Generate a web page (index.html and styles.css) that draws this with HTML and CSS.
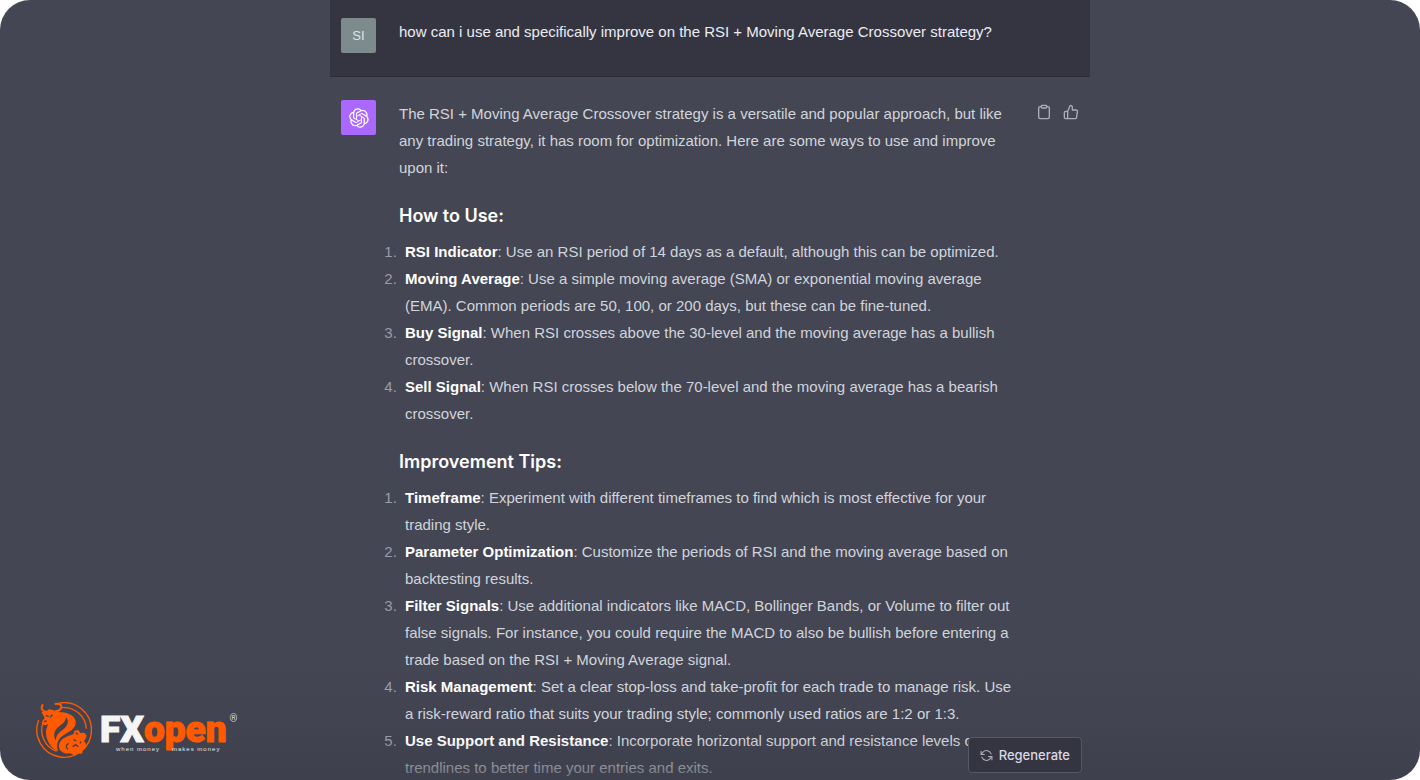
FILE: index.html
```html
<!DOCTYPE html>
<html lang="en">
<head>
  <meta charset="UTF-8" />
  <meta name="viewport" content="width=device-width, initial-scale=1.0" />
  <title>RSI + Moving Average Crossover</title>
  <link rel="stylesheet" href="styles.css">
</head>
<body>
  <div class="frame">
    <main class="chat">
      <section class="message user">
        <div class="avatar avatar-user">SI</div>
        <div class="content">
          <p>how can i use and specifically improve on the RSI + Moving Average Crossover strategy?</p>
        </div>
      </section>

      <section class="message">
        <div class="avatar avatar-bot">
          <svg width="20" height="20" viewBox="0 0 41 41" fill="currentColor" aria-hidden="true"><path d="M37.532 16.87a9.963 9.963 0 0 0-.856-8.184 10.078 10.078 0 0 0-10.855-4.835A9.964 9.964 0 0 0 18.306.5a10.079 10.079 0 0 0-9.614 6.977 9.967 9.967 0 0 0-6.664 4.834 10.08 10.08 0 0 0 1.24 11.817 9.965 9.965 0 0 0 .856 8.185 10.079 10.079 0 0 0 10.855 4.835 9.965 9.965 0 0 0 7.516 3.35 10.078 10.078 0 0 0 9.617-6.981 9.967 9.967 0 0 0 6.663-4.834 10.079 10.079 0 0 0-1.243-11.813ZM22.498 37.886a7.474 7.474 0 0 1-4.799-1.735c.061-.033.168-.091.237-.134l7.964-4.6a1.294 1.294 0 0 0 .655-1.134V19.054l3.366 1.944a.12.12 0 0 1 .066.092v9.299a7.505 7.505 0 0 1-7.49 7.496ZM6.392 31.006a7.471 7.471 0 0 1-.894-5.023c.06.036.162.099.237.141l7.964 4.6a1.297 1.297 0 0 0 1.308 0l9.724-5.614v3.888a.12.12 0 0 1-.048.103l-8.051 4.649a7.504 7.504 0 0 1-10.24-2.744ZM4.297 13.62A7.469 7.469 0 0 1 8.2 10.333c0 .068-.004.19-.004.274v9.201a1.294 1.294 0 0 0 .654 1.132l9.723 5.614-3.366 1.944a.12.12 0 0 1-.114.01L7.04 23.856a7.504 7.504 0 0 1-2.743-10.237Zm27.658 6.437-9.724-5.615 3.367-1.943a.121.121 0 0 1 .113-.01l8.052 4.648a7.498 7.498 0 0 1-1.158 13.528v-9.476a1.293 1.293 0 0 0-.65-1.132Zm3.35-5.043c-.059-.037-.162-.099-.236-.141l-7.965-4.6a1.298 1.298 0 0 0-1.308 0l-9.723 5.614v-3.888a.12.12 0 0 1 .048-.103l8.05-4.645a7.497 7.497 0 0 1 11.135 7.763Zm-21.063 6.929-3.367-1.944a.12.12 0 0 1-.065-.092v-9.299a7.497 7.497 0 0 1 12.293-5.756 6.94 6.94 0 0 0-.236.134l-7.965 4.6a1.294 1.294 0 0 0-.654 1.132l-.006 11.225Zm1.829-3.943 4.33-2.501 4.332 2.5v5l-4.331 2.5-4.331-2.5V18Z"/></svg>
        </div>
        <div class="content">
          <p>The RSI + Moving Average Crossover strategy is a versatile and popular approach, but like any trading strategy, it has room for optimization. Here are some ways to use and improve upon it:</p>

          <h3>How to Use:</h3>
          <ol>
            <li><strong>RSI Indicator</strong>: Use an RSI period of 14 days as a default, although this can be optimized.</li>
            <li><strong>Moving Average</strong>: Use a simple moving average (SMA) or exponential moving average (EMA). Common periods are 50, 100, or 200 days, but these can be fine-tuned.</li>
            <li><strong>Buy Signal</strong>: When RSI crosses above the 30-level and the moving average has a bullish crossover.</li>
            <li><strong>Sell Signal</strong>: When RSI crosses below the 70-level and the moving average has a bearish crossover.</li>
          </ol>

          <h3>Improvement Tips:</h3>
          <ol>
            <li><strong>Timeframe</strong>: Experiment with different timeframes to find which is most effective for your trading style.</li>
            <li><strong>Parameter Optimization</strong>: Customize the periods of RSI and the moving average based on backtesting results.</li>
            <li><strong>Filter Signals</strong>: Use additional indicators like MACD, Bollinger Bands, or Volume to filter out false signals. For instance, you could require the MACD to also be bullish before entering a trade based on the RSI + Moving Average signal.</li>
            <li><strong>Risk Management</strong>: Set a clear stop-loss and take-profit for each trade to manage risk. Use a risk-reward ratio that suits your trading style; commonly used ratios are 1:2 or 1:3.</li>
            <li><strong>Use Support and Resistance</strong>: Incorporate horizontal support and resistance levels or trendlines to better time your entries and exits.</li>
          </ol>
        </div>
        <div class="actions">
          <button type="button" aria-label="Copy">
            <svg width="16" height="16" viewBox="0 0 24 24" aria-hidden="true"><path d="M16 4h2a2 2 0 0 1 2 2v14a2 2 0 0 1-2 2H6a2 2 0 0 1-2-2V6a2 2 0 0 1 2-2h2"/><rect x="8" y="2" width="8" height="4" rx="1"/></svg>
          </button>
          <button type="button" aria-label="Good response">
            <svg width="16" height="16" viewBox="0 0 24 24" aria-hidden="true"><path d="M14 9V5a3 3 0 0 0-3-3l-4 9v11h11.28a2 2 0 0 0 2-1.7l1.38-9a2 2 0 0 0-2-2.3zM7 22H4a2 2 0 0 1-2-2v-7a2 2 0 0 1 2-2h3"/></svg>
          </button>
        </div>
      </section>

      <div class="fade"></div>
      <button type="button" class="regenerate">
        <svg width="13" height="13" viewBox="0 0 24 24" aria-hidden="true"><path d="M2 4v6h6M22 20v-6h-6"/><path d="M20.5 9A9 9 0 0 0 5.6 5.600L2 10M22 14l-3.600 4.400A9 9 0 0 1 3.500 15"/></svg>
        Regenerate
      </button>
    </main>

    <a class="brand" href="#" aria-label="FXOpen">
      <svg class="emblem" width="56" height="56" viewBox="0 0 168 168" aria-hidden="true">
        <!-- rings -->
        <g fill="none" stroke="currentColor" stroke-width="4">
          <path d="M70 3A82 82 0 1 1 8 54"/>
          <path d="M78 17A67 67 0 0 1 151 80M22 60A67 67 0 0 0 62 148"/>
        </g>
        <!-- bull -->
        <path fill="none" stroke="currentColor" stroke-width="6" d="M21 7C12 20 20 32 38 29M56 6C72 2 80 12 74 20 70 27 62 28 56 28"/>
        <path fill="currentColor" d="M16 29l14 1 8-8 14 2 6 6c32-2 58 8 61 28 2 20-16 30-34 40-20 12-26 30-18 50-24-10-38-34-37-62l6-20-7 4-11-3 1-9 7-11z"/>
        <path class="emblem-hole" d="M90 46c11 12 5 26-8 36-12 9-23 18-22 34-10-16-5-32 8-42 12-9 21-15 22-28z"/>
        <!-- bear -->
        <path fill="currentColor" d="M74 146c-10-10-6-28 10-38 10-6 20-8 28-11l3-11 12-2 6 9 11-1 8 8-3 11-5 5 6 9-1 13-8 6-3 11-14-1-9 6-13-6c-10 2-20 0-28-8z"/>
        <g class="emblem-cut" fill="none" stroke-width="4">
          <path d="M29 40l9 4M50 38l-8 8M24 59l8-2"/>
          <path d="M98 124c-8 4-10 12-2 18M110 134l9-6 8 6M112 113l9 4M135 119l-3 5M120 92l5 6"/>
        </g>
      </svg>
      <span class="wordmark">
        <span class="name"><b>FX</b>open<sup>®</sup></span>
        <span class="tagline"><span>when money</span><span>makes money</span></span>
      </span>
    </a>
  </div>
</body>
</html>
```

FILE: styles.css
```css
* {
  margin: 0;
  padding: 0;
  box-sizing: border-box;
}

body {
  font-family: "Liberation Sans", Arial, sans-serif;
  font-size: 15px;
  line-height: 27px;
  background: #fff;
  color: #d1d5db;
}

.frame {
  position: relative;
  height: 100vh;
  overflow: hidden;
  border-radius: 30px;
  background: linear-gradient(#444654 86%, #3f404d);
}

.chat {
  position: relative;
  max-width: 760px;
  height: 100%;
  margin: 0 auto;
  overflow: hidden;
}

.message {
  display: flex;
  align-items: flex-start;
  padding: 23px 11px;
}

.message.user {
  padding: 18px 11px 23px;
  background: #343541;
  border-bottom: 1px solid #2b2c34;
  color: #ececf1;
}

.avatar {
  display: flex;
  align-items: center;
  justify-content: center;
  flex: none;
  width: 35px;
  height: 35px;
  margin-right: 23px;
  border-radius: 2px;
}

.avatar-user {
  background: #7e8b8c;
  color: #dfe3e3;
  font-size: 13px;
}

.avatar-bot {
  background: #ab68ff;
  color: #fff;
}

.content {
  flex: 1;
}

h3 {
  margin: 21px 0 9px;
  font-family: Inter, sans-serif;
  font-size: 18px;
  font-weight: 600;
  color: #fff;
}

ol {
  padding-left: 2px;
}

li {
  padding-left: 4px;
}

li::marker {
  color: #9a9bab;
}

strong {
  font-weight: 700;
  color: #fff;
}

.actions {
  display: flex;
  gap: 11px;
  padding: 4px 0 0 18px;
}

button {
  border: 0;
  background: none;
  color: #acacbe;
  font: inherit;
  cursor: pointer;
}

.actions button {
  display: flex;
}

button svg {
  fill: none;
  stroke: currentColor;
  stroke-width: 2;
  stroke-linecap: round;
  stroke-linejoin: round;
}

.fade {
  position: absolute;
  inset: auto 0 0;
  height: 40px;
  background: linear-gradient(rgba(63, 64, 77, 0), rgba(63, 64, 77, 0.7));
}

.regenerate {
  position: absolute;
  right: 8px;
  bottom: 7px;
  display: flex;
  align-items: center;
  gap: 6px;
  height: 36px;
  padding: 0 11px;
  border: 1px solid #565869;
  border-radius: 4px;
  background: #343541;
  color: #d9d9e3;
  font-family: Inter, sans-serif;
  font-size: 13px;
  font-weight: 500;
}

.regenerate svg {
  color: #acacbe;
}

.brand {
  position: absolute;
  left: 36px;
  bottom: 22px;
  display: flex;
  align-items: center;
  gap: 8px;
  color: #ff5a00;
  text-decoration: none;
}

.emblem-cut {
  stroke: #42434f;
}

.emblem-hole {
  fill: #42434f;
}

.wordmark {
  display: flex;
  flex-direction: column;
  padding-top: 6px;
}

.name {
  display: flex;
  font-family: Roboto, sans-serif;
  font-size: 37px;
  font-weight: 900;
  line-height: 32px;
  -webkit-text-stroke: 1px currentColor;
}

.name b {
  font-weight: 900;
  color: #f5f5f5;
}

.name sup {
  margin-left: 3px;
  font-size: 10px;
  font-weight: 400;
  line-height: 10px;
  color: #d5d5da;
  -webkit-text-stroke: 0;
}

.tagline {
  display: flex;
  gap: 12px;
  padding-left: 16px;
  font-size: 6px;
  line-height: 7px;
  letter-spacing: 1px;
  color: #e2e2e6;
}
```
